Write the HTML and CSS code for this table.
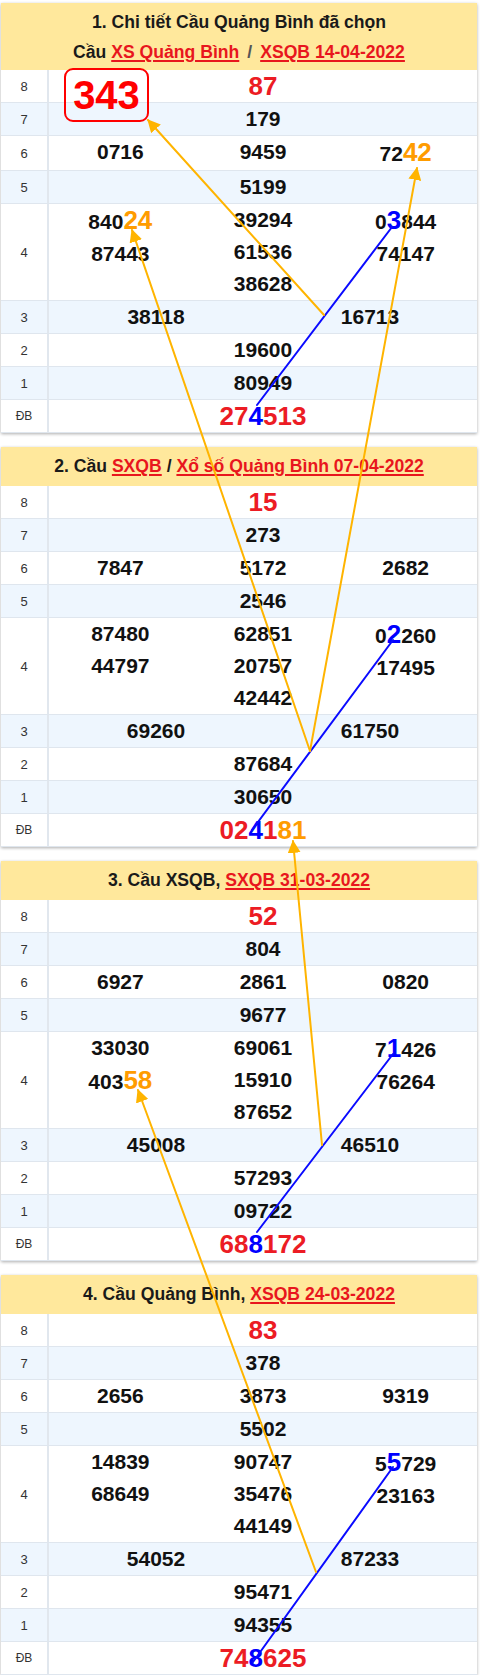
FILE: index.html
```html
<!DOCTYPE html>
<html lang="vi">
<head>
<meta charset="utf-8">
<title>Cầu Quảng Bình</title>
<link rel="stylesheet" href="styles.css">
</head>
<body>
<div class="page">

  <section class="card">
    <header class="head two">
      <div>1. Chi tiết Cầu Quảng Bình đã chọn</div>
      <div>Cầu <a href="#">XS Quảng Bình</a><span class="sl">/</span><a href="#">XSQB 14-04-2022</a></div>
    </header>
    <div class="row"><div class="lbl">8</div><div class="nums big"><span class="pick">343</span><span>87</span></div></div>
    <div class="row alt"><div class="lbl">7</div><div class="nums"><span>179</span></div></div>
    <div class="row"><div class="lbl">6</div><div class="nums c3"><span>0716</span><span>9459</span><span>72<span class="o">42</span></span></div></div>
    <div class="row alt"><div class="lbl">5</div><div class="nums"><span>5199</span></div></div>
    <div class="row"><div class="lbl">4</div><div class="nums c3">
      <div class="col"><span>840<span class="o">24</span></span><span>87443</span></div>
      <div class="col"><span>39294</span><span>61536</span><span>38628</span></div>
      <div class="col"><span>0<span class="b">3</span>844</span><span>74147</span></div>
    </div></div>
    <div class="row alt"><div class="lbl">3</div><div class="nums c2"><span>38118</span><span>16713</span></div></div>
    <div class="row"><div class="lbl">2</div><div class="nums"><span>19600</span></div></div>
    <div class="row alt"><div class="lbl">1</div><div class="nums"><span>80949</span></div></div>
    <div class="row"><div class="lbl db">ĐB</div><div class="nums big"><span>27<span class="b">4</span>513</span></div></div>
  </section>

  <section class="card">
    <header class="head">2. Cầu <a href="#">SXQB</a> / <a href="#">Xổ số Quảng Bình 07-04-2022</a></header>
    <div class="row"><div class="lbl">8</div><div class="nums big"><span>15</span></div></div>
    <div class="row alt"><div class="lbl">7</div><div class="nums"><span>273</span></div></div>
    <div class="row"><div class="lbl">6</div><div class="nums c3"><span>7847</span><span>5172</span><span>2682</span></div></div>
    <div class="row alt"><div class="lbl">5</div><div class="nums"><span>2546</span></div></div>
    <div class="row"><div class="lbl">4</div><div class="nums c3">
      <div class="col"><span>87480</span><span>44797</span></div>
      <div class="col"><span>62851</span><span>20757</span><span>42442</span></div>
      <div class="col"><span>0<span class="b">2</span>260</span><span>17495</span></div>
    </div></div>
    <div class="row alt"><div class="lbl">3</div><div class="nums c2"><span>69260</span><span>61750</span></div></div>
    <div class="row"><div class="lbl">2</div><div class="nums"><span>87684</span></div></div>
    <div class="row alt"><div class="lbl">1</div><div class="nums"><span>30650</span></div></div>
    <div class="row"><div class="lbl db">ĐB</div><div class="nums big"><span>02<span class="b">4</span>1<span class="o">81</span></span></div></div>
  </section>

  <section class="card">
    <header class="head">3. Cầu XSQB, <a href="#">SXQB 31-03-2022</a></header>
    <div class="row"><div class="lbl">8</div><div class="nums big"><span>52</span></div></div>
    <div class="row alt"><div class="lbl">7</div><div class="nums"><span>804</span></div></div>
    <div class="row"><div class="lbl">6</div><div class="nums c3"><span>6927</span><span>2861</span><span>0820</span></div></div>
    <div class="row alt"><div class="lbl">5</div><div class="nums"><span>9677</span></div></div>
    <div class="row"><div class="lbl">4</div><div class="nums c3">
      <div class="col"><span>33030</span><span>403<span class="o">58</span></span></div>
      <div class="col"><span>69061</span><span>15910</span><span>87652</span></div>
      <div class="col"><span>7<span class="b">1</span>426</span><span>76264</span></div>
    </div></div>
    <div class="row alt"><div class="lbl">3</div><div class="nums c2"><span>45008</span><span>46510</span></div></div>
    <div class="row"><div class="lbl">2</div><div class="nums"><span>57293</span></div></div>
    <div class="row alt"><div class="lbl">1</div><div class="nums"><span>09722</span></div></div>
    <div class="row"><div class="lbl db">ĐB</div><div class="nums big"><span>68<span class="b">8</span>172</span></div></div>
  </section>

  <section class="card">
    <header class="head">4. Cầu Quảng Bình, <a href="#">XSQB 24-03-2022</a></header>
    <div class="row"><div class="lbl">8</div><div class="nums big"><span>83</span></div></div>
    <div class="row alt"><div class="lbl">7</div><div class="nums"><span>378</span></div></div>
    <div class="row"><div class="lbl">6</div><div class="nums c3"><span>2656</span><span>3873</span><span>9319</span></div></div>
    <div class="row alt"><div class="lbl">5</div><div class="nums"><span>5502</span></div></div>
    <div class="row"><div class="lbl">4</div><div class="nums c3">
      <div class="col"><span>14839</span><span>68649</span></div>
      <div class="col"><span>90747</span><span>35476</span><span>44149</span></div>
      <div class="col"><span>5<span class="b">5</span>729</span><span>23163</span></div>
    </div></div>
    <div class="row alt"><div class="lbl">3</div><div class="nums c2"><span>54052</span><span>87233</span></div></div>
    <div class="row"><div class="lbl">2</div><div class="nums"><span>95471</span></div></div>
    <div class="row alt"><div class="lbl">1</div><div class="nums"><span>94355</span></div></div>
    <div class="row"><div class="lbl db">ĐB</div><div class="nums big"><span>74<span class="b">8</span>625</span></div></div>
  </section>

</div>

<svg class="overlay" width="480" height="1677" viewBox="0 0 480 1677" aria-hidden="true">
  <defs>
    <marker id="ah" viewBox="0 0 12 12" refX="11" refY="6" markerWidth="13" markerHeight="13" markerUnits="userSpaceOnUse" orient="auto">
      <path d="M0,0 L12,6 L0,12 z" fill="#ffb400"/>
    </marker>
  </defs>
  <g class="blue">
    <line x1="257" y1="405" x2="392" y2="227"/>
    <line x1="252" y1="830" x2="393" y2="640"/>
    <line x1="257" y1="1232" x2="393" y2="1054"/>
    <line x1="253" y1="1662" x2="393" y2="1467"/>
  </g>
  <g class="orange">
    <line x1="324" y1="315" x2="148" y2="120" marker-end="url(#ah)"/>
    <line x1="310" y1="751" x2="132" y2="230" marker-end="url(#ah)"/>
    <line x1="310" y1="751" x2="417" y2="168" marker-end="url(#ah)"/>
    <line x1="322" y1="1145" x2="293" y2="841" marker-end="url(#ah)"/>
    <line x1="316" y1="1572" x2="138" y2="1090" marker-end="url(#ah)"/>
  </g>
</svg>
</body>
</html>
```

FILE: styles.css
```css
* { box-sizing: border-box; }

body {
  margin: 0;
  background: #fff;
  font-family: "Liberation Sans", Arial, sans-serif;
  position: relative;
}

.page {
  padding: 3px 3px 0 1px;
  display: flex;
  flex-direction: column;
  gap: 14px;
}

.card {
  background: #fff;
  box-shadow: 0 1px 3px rgba(0, 0, 0, 0.32);
}

.head {
  background: #ffe89c;
  text-align: center;
  font-weight: bold;
  font-size: 17.6px;
  line-height: 30px;
  color: #1a1a1a;
  padding: 4px 0 5px;
}

.head.two {
  padding: 4px 0 3px;
}

.head a {
  color: #e8161d;
  text-decoration: underline;
  text-decoration-thickness: 1.5px;
  text-underline-offset: 2px;
}

.sl {
  color: #555;
  margin: 0 8px;
}

.row {
  display: grid;
  grid-template-columns: 48px 1fr;
  border-bottom: 1px solid #dfe6ee;
}

.row.alt {
  background: #eef6fe;
}

.lbl {
  border-right: 2px solid #e1e7ee;
  display: flex;
  align-items: center;
  justify-content: center;
  font-size: 13px;
  color: #333;
}

.lbl.db {
  font-size: 12px;
}

.nums {
  position: relative;
  display: grid;
  text-align: center;
  font-weight: bold;
  font-size: 21px;
  line-height: 32px;
  color: #111;
}

.c3 { grid-template-columns: repeat(3, 1fr); }
.c2 { grid-template-columns: repeat(2, 1fr); }

.col {
  display: flex;
  flex-direction: column;
}

.big {
  font-size: 26px;
  color: #ec1c24;
}

.b {
  color: #0000ff;
  font-size: 26px;
}

.o {
  color: #ff9c00;
  font-size: 26px;
}

.pick {
  position: absolute;
  left: 15px;
  top: -2px;
  width: 85px;
  height: 54px;
  border: 2px solid #ff0000;
  border-radius: 9px;
  color: #ff0000;
  font-size: 40px;
  line-height: 50px;
}

.overlay {
  position: absolute;
  top: 0;
  left: 0;
  pointer-events: none;
}

.overlay line {
  stroke-width: 2;
  stroke-linecap: round;
}

.blue line { stroke: #0a0aff; }
.orange line { stroke: #ffb400; }
```
